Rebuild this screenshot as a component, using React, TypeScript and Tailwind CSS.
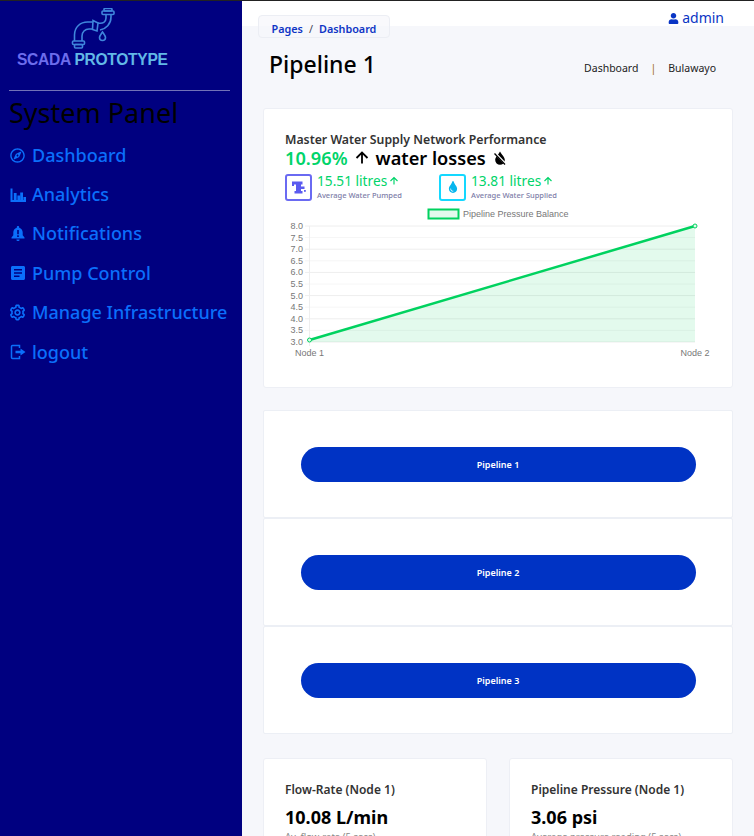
import { BiCog, BiUpArrowAlt } from "react-icons/bi";
import { FaRegCompass, FaTint, FaUser } from "react-icons/fa";
import type { ReactNode } from "react";

const fontStack = "font-['Noto_Sans','Open_Sans',sans-serif]";

function BarsIcon() {
  return (
    <svg viewBox="0 0 16 16" className="h-[16px] w-[16px]" fill="currentColor">
      <path d="M0.500 1.500h2V13H16v2H0.500z" />
      <rect x="3.800" y="6" width="2.800" height="7" />
      <rect x="7.400" y="8.500" width="2.800" height="4.500" />
      <rect x="10.200" y="5.500" width="2.800" height="7.500" />
      <rect x="13.400" y="10" width="2.600" height="3" />
    </svg>
  );
}

function BellIcon() {
  return (
    <svg viewBox="0 0 16 16" className="h-[17px] w-[16px]" fill="currentColor">
      <path
        fillRule="evenodd"
        d="M8 0.600c.7 0 1.200.500 1.200 1.200v.500c2.200.600 3.500 2.500 3.500 4.800v2.600L14.500 12v1H1.500v-1l1.800-2.300V7.100c0-2.300 1.300-4.200 3.500-4.800v-.500C6.800 1.100 7.300.600 8 .600zM7.200 4.600v4.200h1.600V4.600zm0 5.200V11.500h1.600V9.800z"
      />
      <path d="M6.400 14h3.200c0 .900-.700 1.600-1.600 1.600S6.400 14.900 6.400 14z" />
    </svg>
  );
}

function DocIcon() {
  return (
    <svg viewBox="0 0 16 16" className="h-[16px] w-[16px]" fill="currentColor">
      <path
        fillRule="evenodd"
        d="M2.500 1h11c.800 0 1.500.700 1.500 1.500v11c0 .800-.700 1.500-1.500 1.500h-11C1.700 15 1 14.300 1 13.500v-11C1 1.700 1.700 1 2.500 1zM4 4v1.600h8V4zm0 3.200v1.600h8V7.200zm0 3.200V12h5.500v-1.600z"
      />
    </svg>
  );
}

function LogoutIcon() {
  return (
    <svg viewBox="0 0 16 16" className="h-[16px] w-[16px]" fill="none" stroke="currentColor" strokeWidth="1.500">
      <path d="M9.500 4V1.500H2.500c-.500 0-1 .500-1 1v11c0 .500.500 1 1 1h7V12" />
      <path d="M5.500 6.800h5V4.500L15.500 8l-5 3.500V9.200h-5z" fill="currentColor" stroke="none" />
    </svg>
  );
}

function PumpIcon() {
  return (
    <svg viewBox="0 0 16 16" className="h-[16px] w-[16px]" fill="currentColor">
      <path d="M1 2.500h10.500v3H10v2h3.500V10H10v2h1.500v2.500h-8V12H5V5.500H3V7H1z" />
      <rect x="13" y="11" width="1.800" height="1.800" />
    </svg>
  );
}

function DropSlashIcon() {
  return (
    <svg viewBox="0 0 14 14" className="ml-[7px] h-[14px] w-[14px]">
      <path d="M7 0.500C5 4 2.200 6.200 2.200 9a4.800 4.800 0 0 0 9.600 0C11.800 6.200 9 4 7 0.500z" fill="#000" />
      <line x1="2" y1="2" x2="12.500" y2="13" stroke="#fff" strokeWidth="2.400" />
      <line x1="1.500" y1="2.500" x2="12" y2="13.500" stroke="#000" strokeWidth="1.300" />
    </svg>
  );
}

function Logo() {
  return (
    <div className="flex h-[89px] flex-col items-start">
      <svg viewBox="0 0 44 42" className="ml-[71px] mt-[7px] h-[42px] w-[44px]" fill="none" stroke="#3f86dc" strokeWidth="1.600">
        <rect x="1.500" y="33" width="12" height="3.500" rx="1" />
        <rect x="3.500" y="36.500" width="8" height="3.500" rx="1" />
        <path d="M3.500 33v-6c0-8 6-13 13-13h5 M11 33v-5c0-4 3-7 7-7h4" />
        <path d="M22 12.500l5 2.500-1 8-4.500-1.500z" />
        <path d="M27 15c5 1 8-1 8-5V6 M29 22c6-1 11-6 11-13V6" />
        <rect x="31" y="3" width="12" height="3.500" rx="1" />
        <rect x="33" y="0.500" width="8" height="2.500" rx="1" />
        <path d="M31.500 24c-2 3-3 4-3 5.500a3 3 0 0 0 6 0c0-1.500-1-2.500-3-5.500z" />
      </svg>
      <p className="ml-[17px] mt-[1px] whitespace-nowrap font-['Liberation_Sans',sans-serif] text-[15.600px] leading-[18px] font-bold tracking-[-0.3px]">
        <span className="text-[#6c6cec]">SCADA </span>
        <span className="text-[#62b8e6]">PROTOTYPE</span>
      </p>
    </div>
  );
}

function NavItem({ icon, label }: { icon: ReactNode; label: string }) {
  return (
    <a href="#" className="flex h-[39.400px] items-center text-[#0b6ffb]">
      <span className="flex w-[23px] shrink-0 items-center pl-[1px]">{icon}</span>
      <span className="whitespace-nowrap text-[18px] font-medium">{label}</span>
    </a>
  );
}

function Sidebar() {
  return (
    <aside className="h-full w-[242px] shrink-0 bg-[#000080]">
      <Logo />
      <div className="ml-[9px] mr-[12px] border-t border-[#7272b8]" />
      <h2 className="ml-[9px] mt-[4px] text-[27px] leading-[36px] text-black">System Panel</h2>
      <nav className="ml-[9px] mt-[4.500px]">
        <NavItem icon={<FaRegCompass className="h-[15px] w-[15px]" />} label="Dashboard" />
        <NavItem icon={<BarsIcon />} label="Analytics" />
        <NavItem icon={<BellIcon />} label="Notifications" />
        <NavItem icon={<DocIcon />} label="Pump Control" />
        <NavItem icon={<BiCog className="-ml-[2px] h-[19px] w-[19px]" />} label="Manage Infrastructure" />
        <NavItem icon={<LogoutIcon />} label="logout" />
      </nav>
    </aside>
  );
}

function Stat({ icon, value, label, boxClass }: { icon: ReactNode; value: string; label: string; boxClass: string }) {
  return (
    <div className="flex items-center gap-[5px]">
      <div className={`flex h-[27px] w-[27px] items-center justify-center rounded-[3px] border-2 ${boxClass}`}>{icon}</div>
      <div className="-mt-[1px]">
        <p className="flex items-center text-[13.700px] leading-[17px] text-[#00d46a]">
          {value}
          <BiUpArrowAlt className="h-[14px] w-[14px]" />
        </p>
        <p className="text-[7.500px] leading-[12px] font-medium text-[#7d7da8]">{label}</p>
      </div>
    </div>
  );
}

function PressureChart() {
  const ticks = ["8.0", "7.5", "7.0", "6.5", "6.0", "5.5", "5.0", "4.5", "4.0", "3.5", "3.0"];
  return (
    <svg viewBox="285 207 430 155" className="mt-[6px] block h-[155px] w-[430px]">
      <g fontFamily="Liberation Sans, sans-serif" fontSize="9" fill="#777">
        <rect x="428.500" y="209.500" width="30" height="9" fill="#e3f9ec" stroke="#00d25f" strokeWidth="2" />
        <text x="463" y="217">
          Pipeline Pressure Balance
        </text>
        {ticks.map((t, i) => (
          <g key={t}>
            <line x1="305" x2="695" y1={226 + i * 11.6} y2={226 + i * 11.6} stroke={i % 2 ? "#f6f6f6" : "#eeeeee"} />
            <text x="303" y={229 + i * 11.6} textAnchor="end">
              {t}
            </text>
          </g>
        ))}
        <line x1="309.500" x2="309.500" y1="226" y2="346" stroke="#eeeeee" />
        <path d="M309.500 340 L695 226 V342 H309.500z" fill="#00d25f" fillOpacity="0.11" />
        <line x1="309.500" y1="340" x2="695" y2="226" stroke="#00d25f" strokeWidth="2.500" />
        <circle cx="309.500" cy="340" r="2" fill="#e3f9ec" stroke="#00d25f" />
        <circle cx="695" cy="226" r="2" fill="#e3f9ec" stroke="#00d25f" />
        <text x="309.500" y="356" textAnchor="middle">
          Node 1
        </text>
        <text x="695" y="356" textAnchor="middle">
          Node 2
        </text>
      </g>
    </svg>
  );
}

function PipelineRow({ name }: { name: string }) {
  return (
    <div className="flex h-[108px] shrink-0 items-center justify-center rounded-[2px] border border-[#eceff5] bg-white">
      <button className="h-[35px] w-[395px] rounded-[17.500px] bg-[#0033c4] pt-[1px] text-[9px] font-semibold text-white">{name}</button>
    </div>
  );
}

function ReadingCard({ title, value, note }: { title: string; value: string; note: string }) {
  return (
    <div className="rounded-[3px] border border-[#edeff5] bg-white px-[21px] pt-[22px] pb-[40px]">
      <h3 className="text-[12px] leading-[18px] font-semibold text-[#333]">{title}</h3>
      <p className="mt-[6px] text-[18px] leading-[24px] font-bold text-black">{value}</p>
      <p className="mt-[1px] text-[9.500px] leading-[14px] text-[#888]">{note}</p>
    </div>
  );
}

export default function App() {
  return (
    <div className={`${fontStack} flex h-[836px] w-[754px] flex-col overflow-hidden bg-white`}>
      <div className="h-px shrink-0 bg-[#222]" />
      <div className="flex min-h-0 flex-1">
        <Sidebar />
        <main className="flex min-w-0 flex-1 flex-col bg-[#f6f7fb]">
          <header className="flex h-[25px] shrink-0 items-start justify-end bg-white pr-[30px] pt-[8px]">
            <span className="flex items-center gap-[3px] text-[14px] leading-[18px] text-[#0a35c4]">
              <FaUser className="h-[11px] w-[11px]" />
              admin
            </span>
          </header>
          <div className="-mt-[11px] ml-[16px] flex h-[23px] w-[132px] shrink-0 items-center justify-center rounded-[4px] border border-[#eceef4] bg-[#f6f7fb]/70 pt-[5px] text-[10.800px] font-semibold text-[#0f35c5]">
            Pages <span className="mx-[6px] font-normal text-[#445]">/</span> Dashboard
          </div>
          <div className="ml-[27px] mr-[38px] mt-[8px] flex shrink-0 items-start justify-between">
            <h1 className="text-[23px] leading-[36px] font-medium text-black">Pipeline 1</h1>
            <div className="mt-[15px] flex items-center text-[10.500px] leading-[14px] text-[#222]">
              <span>Dashboard</span>
              <span className="mx-[12px] text-[#a06a10]">|</span>
              <span>Bulawayo</span>
            </div>
          </div>

          <div className="ml-[21px] mr-[21px] mt-[26px] flex shrink-0 flex-col">
            <section className="h-[280px] shrink-0 rounded-[3px] border border-[#edeff5] bg-white pl-[21px] pt-[22px]">
              <h3 className="text-[12.300px] leading-[17px] font-semibold text-[#333]">Master Water Supply Network Performance</h3>
              <p className="flex h-[20px] items-center text-[18.200px] leading-[20px] font-semibold text-black">
                <span className="text-[#00d46a]">10.96%</span>
                <BiUpArrowAlt className="mx-[3px] h-[22px] w-[22px]" />
                <span>water losses</span>
                <DropSlashIcon />
              </p>
              <div className="mt-[5px] flex gap-[27px]">
                <div className="w-[127px]">
                  <Stat icon={<span className="text-[#5b5bf0]"><PumpIcon /></span>} value="15.51 litres" label="Average Water Pumped" boxClass="border-[#6a6af2]" />
                </div>
                <Stat icon={<FaTint className="h-[12px] w-[12px] text-[#06b6ee]" />} value="13.81 litres" label="Average Water Supplied" boxClass="border-[#14d8ff]" />
              </div>
              <PressureChart />
            </section>

            <section className="mt-[22px] flex shrink-0 flex-col">
              <PipelineRow name="Pipeline 1" />
              <PipelineRow name="Pipeline 2" />
              <PipelineRow name="Pipeline 3" />
            </section>

            <section className="mt-[24px] grid shrink-0 grid-cols-2 gap-[22px]">
              <ReadingCard title="Flow-Rate (Node 1)" value="10.08 L/min" note="Av. flow-rate (5 secs)" />
              <ReadingCard title="Pipeline Pressure (Node 1)" value="3.06 psi" note="Average pressure reading (5 secs)" />
            </section>
          </div>
        </main>
      </div>
    </div>
  );
}
